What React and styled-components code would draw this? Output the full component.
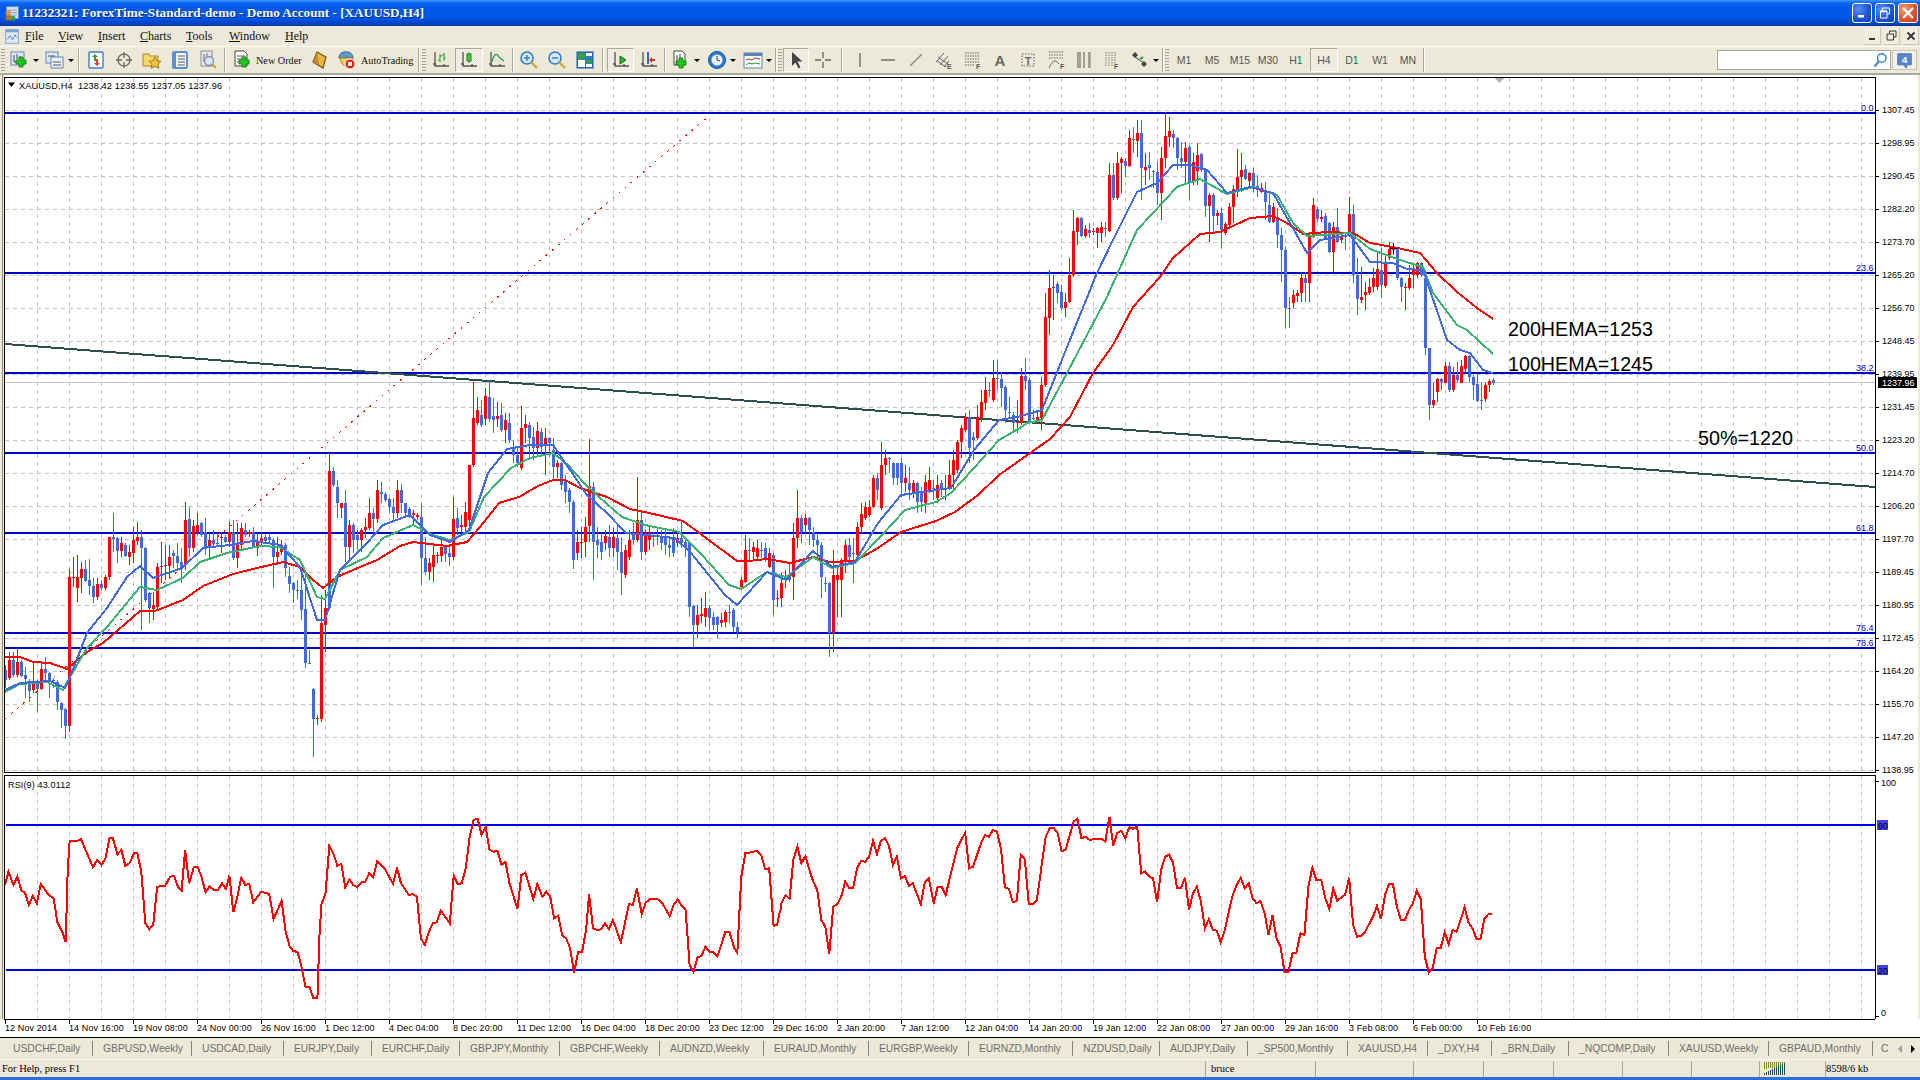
import React from 'react';
import styled, { createGlobalStyle } from 'styled-components';

const Global = createGlobalStyle`
  html, body { margin: 0; padding: 0; background: #ece9d8; overflow: hidden; }
  #root { width: 1920px; height: 1080px; }
`;

const SERIF = '"Liberation Serif", serif';
const SANS = '"Liberation Sans", Arial, sans-serif';

/* ---------- digitised chart data ---------- */
const segA = `15,570,600,b,555,625;27,540,595,r,515,600;40,540,585,b,515,590;52,545,585,r,505,590;64,545,587,b,540,590;76,585,597,b,560,655;88,603,632,b,597,665;100,603,630,r,545,640;112,610,628,b,600,695;124,568,628,r,545,630;136,568,580,b,530,610;148,580,600,b,575,655;160,600,603,b,595,625;172,605,665,b,600,690;184,670,690,b,665,745;196,687,738,b,685,778;208,290,738,r,268,755;220,290,293,r,230,320;232,290,323,r,225,365;244,268,295,r,245,340;256,268,302,b,240,305;268,300,318,b,238,345;280,318,350,b,295,370;292,312,350,r,295,360;304,312,325,b,300,330;316,290,325,r,285,330;328,170,290,r,170,300;340,172,178,b,100,215;352,175,212,b,170,250;364,190,212,r,170,230;376,195,228,b,190,232;388,215,230,r,195,255;400,180,218,r,140,250;412,170,182,r,125,195;424,170,205,b,150,450;436,205,360,b,200,365;448,340,385,b,335,430;460,375,388,r,335,420;472,262,380,r,250,390;484,258,262,r,185,310;496,255,258,r,195,300;508,232,258,r,195,290;520,220,228,b,210,265;532,228,250,b,190,265;544,245,260,b,205,310;556,120,255,r,65,270;568,118,205,b,80,230;580,138,205,r,120,215;592,135,155,r,100,165;604,130,165,b,125,170;616,155,205,b,115,225;628,180,205,r,160,240;640,180,192,b,150,200;652,190,193,b,160,200;664,172,175,r,155,220;676,170,185,b,165,190;688,155,185,r,125,200;700,155,235,b,120,240;712,195,235,r,130,265;724,145,195,r,130,210;736,150,165,b,130,170;748,155,162,r,150,170;760,155,205,b,140,205;772,183,205,r,160,228;784,175,190,r,155,195;796,172,182,b,165,190;808,172,180,b,160,190;820,180,230,b,175,325;832,215,230,r,170,255;844,195,215,r,180,225;856,195,265,b,190,290;868,288,312,b,260,340;880,310,330,b,305,370;892,330,333,b,300,358;904,330,390,b,280,420;916,388,550,b,280,565;928,548,551,b,510,552;940,628,718,b,625,830;952,714,718,r,705,735;964,430,718,r,345,725;976,385,435,r,330,515;988,310,385,b,300,390;988,-27,310,r,-80,330;1000,-27,15,b,-40,20;1012,20,68,b,0,115;1024,68,85,r,68,115;1036,68,200,b,30,245;1048,135,200,r,120,240;1060,135,180,b,130,220;1072,165,180,b,150,210;1084,150,180,r,145,215;1096,140,150,r,115,175;1108,100,145,r,55,150;1120,100,118,b,85,160;1132,30,118,r,0,130;1144,35,42,b,5,70;1156,42,60,b,35,65;1168,58,80,b,55,100;1180,80,100,b,55,120;1192,30,100,r,0,115;1204,30,70,b,12,100;1216,70,100,b,70,110;1228,88,110,b,80,115;1240,100,105,r,90,135;1252,105,112,r,100,120;1264,112,235,b,68,315;1276,235,275,b,170,285;1288,250,275,r,235,300;1300,225,260,r,190,305;1312,225,228,r,215,250;1324,200,228,r,180,245;1336,200,222,b,195,245;1348,220,232,b,195,258;1360,118,232,r,50,240;1372,115,145,b,85,165;1384,135,140,r,105,160;1396,95,140,r,65,160`;
const segB = `182,315,480,r,410,520;192,175,315,r,65,320;203,150,190,r,110,195;213,165,195,b,120,200;223,108,178,r,85,195;233,110,178,b,60,185;245,168,180,b,115,220;255,168,178,r,125,200;265,165,210,b,128,215;275,180,210,r,160,250;285,190,240,b,160,250;297,265,285,b,240,310;307,285,310,b,265,320;318,205,325,r,138,330;328,193,205,r,165,250;338,195,235,b,185,300;348,230,265,b,200,300;358,213,265,r,185,290;368,215,260,b,205,285;380,235,255,r,205,345;390,235,250,b,230,290;400,270,320,b,235,360;412,308,320,r,300,355;422,310,375,b,305,390;432,360,395,b,345,430;443,390,425,b,385,460;453,425,600,b,420,628;463,545,580,r,510,600;473,545,547,r,500,595;483,500,545,r,470,590;495,378,497,r,238,545;505,380,545,b,365,660;515,540,555,b,500,595;527,545,575,b,520,600;537,528,550,r,510,570;547,530,565,b,495,590;557,530,565,r,505,590;568,535,575,b,495,630;578,575,640,b,530,705;589,570,645,r,555,655;600,540,590,r,510,600;610,525,540,b,490,555;620,480,540,r,350,545;630,480,575,b,450,600;641,520,575,r,510,585;652,518,540,r,500,570;662,525,528,b,515,560;672,525,530,b,505,555;683,530,550,b,510,570;693,535,555,b,505,585;704,555,565,b,530,590;714,530,578,b,505,590;725,535,548,r,520,560;735,535,550,b,480,565;745,545,560,b,535,590;755,550,740,b,545,770;767,738,795,b,735,860;778,765,795,r,735,835;788,763,767,r,715,790;798,745,770,r,695,800;808,745,775,b,735,810;818,770,795,b,755,810;830,770,795,b,768,835;840,780,790,r,760,800;850,755,785,r,750,800;860,755,758,b,735,790;872,750,800,b,745,815;882,800,815,b,785,835;892,660,680,r,650,690;902,570,665,r,525,670;913,570,573,b,535,600;923,560,575,r,545,600;933,565,590,r,540,600;943,570,573,b,545,595;953,565,600,b,550,605;965,580,620,r,565,625;975,585,720,b,580,765;985,715,718,r,690,740;995,670,715,r,640,740;1006,650,653,r,630,685;1016,648,660,b,605,665;1027,535,650,r,490,720;1037,475,535,r,390,565;1048,475,515,b,465,550;1058,475,495,r,462,520;1068,475,510,b,470,555;1080,515,540,b,500,560;1090,540,555,b,520,590;1100,555,650,b,545,715;1112,668,672,b,650,695;1122,670,820,b,665,890;1132,645,820,r,570,875;1143,645,660,r,620,770;1153,600,660,r,595,770;1163,555,600,r,540,640;1174,555,590,b,535,600;1184,578,582,b,535,670;1195,500,585,r,485,600;1205,462,500,r,430,518;1215,440,475,r,425,480;1227,440,465,r,420,470;1237,355,440,r,345,445;1247,355,390,b,340,420;1258,315,445,r,245,450;1268,295,315,r,270,345;1278,295,298,b,290,340;1288,310,355,b,305,375;1298,310,355,b,310,375;1308,310,370,b,295,410;1318,355,370,r,315,395;1330,370,390,b,320,420;1340,370,400,r,360,415;1350,370,425,b,365,460;1360,395,425,b,380,455;1372,365,430,r,345,460;1382,360,395,r,320,400;1392,385,388,b,360,420;1405,375,415,r,345,430;1415,370,385,b,360,410;1425,385,388,r,345,420;1435,345,385,r,300,390;1445,300,345,r,270,390;1455,245,330,r,240,340;1465,205,245,r,195,295;1475,170,210,r,160,215;1486,170,265,b,150,310;1497,230,240,b,215,300;1508,170,235,r,135,240;1518,125,175,r,90,185;1530,90,130,r,50,150;1540,90,93,b,65,110;1550,55,120,r,0,125;1560,55,58,b,0,90`;
const segC = `4,868,895,b,845,950;16,890,960,b,885,1000;28,965,968,b,920,985;40,975,1000,b,965,1030;52,995,998,r,930,1030;64,858,1000,r,835,1005;76,858,872,b,805,900;88,870,995,b,865,1000;100,985,988,b,960,990;112,980,990,r,960,1000;124,885,985,r,860,1020;136,680,885,r,610,890;148,595,685,r,540,735;160,590,593,r,555,690;172,583,608,b,575,640;184,605,655,b,585,660;196,635,655,r,610,680;208,555,635,r,505,640;220,423,555,r,360,560;232,385,425,r,380,465;244,385,437,b,380,440;256,418,437,r,405,445;268,420,428,b,400,445;280,423,426,r,415,435;292,415,430,r,412,475;304,412,430,r,395,455;316,415,418,b,395,440;328,255,422,r,220,425;340,255,325,b,220,330;352,220,325,r,185,330;364,208,220,r,200,310;376,212,228,b,205,262;388,145,228,r,120,230;400,148,151,b,110,190;412,130,152,r,90,200;424,130,235,b,90,330;436,232,240,r,190,285;448,225,235,b,185,270;460,243,246,b,240,295;472,245,310,b,215,345;484,203,310,r,170,390;496,138,203,r,65,235;508,123,140,r,80,170;520,132,145,b,120,175;532,145,205,b,140,240;544,205,215,b,155,235;556,175,215,r,155,280;568,172,275,b,165,330;580,215,275,r,190,285;592,195,243,r,160,285;604,192,240,b,190,245;616,240,348,b,235,380;628,315,348,r,310,455;640,315,378,b,310,430;652,370,378,r,360,405;664,370,420,b,355,475;676,402,430,r,395,435;688,352,405,r,340,410;700,298,352,r,285,400;712,262,298,r,178,320;724,240,262,r,190,305;736,238,268,b,225,270;748,250,272,r,245,290;760,250,290,b,235,305;772,288,300,b,255,320;784,295,305,r,280,310;796,300,335,b,275,390;808,345,395,b,310,400;820,350,395,r,340,400;832,380,435,b,355,475;844,435,480,b,415,575;856,480,655,b,470,715;868,653,656,b,620,715;880,615,638,r,600,655;892,610,618,r,600,635;904,565,610,r,545,635;916,565,580,b,545,635;928,440,580,r,430,635;940,345,440,r,325,445;952,358,388,b,350,395;964,380,388,r,360,395;976,378,445,b,370,450;988,400,485,b,395,490;1000,412,485,r,395,545;1012,412,455,b,355,460;1024,440,450,r,430,460;1036,438,441,b,430,480;1048,372,435,r,322,440;1060,372,555,b,345,580;1072,555,628,b,505,675;1084,620,630,r,530,640;1096,605,615,r,575,660;1108,590,610,r,565,615;1120,565,590,r,535,605;1132,538,590,r,490,600;1144,540,585,b,475,625;1156,515,588,r,495,595;1168,478,505,r,455,510;1180,476,480,r,460,495;1192,478,565,b,470,570;1204,565,592,b,560,635;1216,590,593,r,580,660;1228,565,595,r,525,600;1240,538,555,r,525,595;1252,520,555,r,515,565;1264,518,555,b,515,560;1276,565,775,b,540,795;1288,775,945,b,775,990;1300,930,945,r,880,955;1312,868,905,r,865,935;1324,868,875,b,865,900;1336,828,878,r,815,880;1348,828,900,b,815,905;1360,855,900,r,830,905;1372,855,870,b,815,875;1384,828,878,r,810,880;1396,798,838,r,795,850;1408,798,860,b,795,875;1420,860,885,b,855,930;1432,882,932,b,850,935;1444,930,933,b,880,960;1456,885,928,r,880,935;1468,872,885,r,868,905;1480,870,878,b,865,885`;

const parseSeg = (s, sx, ox, oy) =>
  s.split(';').map((row) => {
    const [zx, t, b, c, wt, wb] = row.split(',');
    const x = ox + Number(zx) / sx;
    const bx = 5 + 4 * Math.round((x - 5) / 4);
    const Y = (v) => oy + Number(v) / 3;
    return { x: bx, top: Y(t), bot: Y(b), c, hi: Y(wt), lo: Y(wb) };
  });

const CANDLES = [
  ...parseSeg(segA, 3, 0, 480),
  ...parseSeg(segB, 2.613, 400, 360),
  ...parseSeg(segC, 3, 1000, 90),
];

const MA_RED = '5,657 20,657 33,662 50,663 67,669 87,652 103,643 140,611 155,611 183,600 203,586 233,574 257,568 283,562 300,567 313,580 323,588 337,577 360,567 377,560 400,546 413,542 447,546 467,542 480,527 499,503 519,497 538,486 553,480 565,480 580,488 607,497 630,509 649,513 683,521 702,535 737,561 748,561 767,559 790,563 813,557 830,562 855,561 878,548 901,532 936,521 955,512 978,495 999,475 1050,439 1070,417 1093,373 1113,345 1133,307 1160,277 1173,258 1200,234 1220,232 1250,218 1273,216 1287,223 1303,234 1327,232 1353,233 1370,243 1393,247 1420,253 1437,273 1457,292 1477,308 1493,319';
const MA_GREEN = '5,692 20,684 47,682 63,690 70,677 87,648 107,627 140,587 157,590 183,578 200,562 227,553 260,546 280,547 300,560 317,597 325,599 340,570 367,557 383,538 413,525 433,535 450,540 469,532 484,497 511,468 530,458 553,453 568,465 584,483 599,497 622,517 645,525 679,532 702,555 729,585 741,589 767,572 786,577 813,557 832,568 855,563 882,535 905,510 936,502 951,493 974,468 999,440 1020,428 1027,423 1042,420 1067,373 1107,297 1137,230 1153,213 1177,187 1200,179 1227,194 1253,187 1277,195 1293,223 1307,236 1350,233 1370,249 1400,260 1423,267 1433,293 1457,325 1467,330 1493,354';
const MA_BLUE = '5,690 20,683 50,681 65,688 70,677 87,633 107,608 127,577 140,566 153,578 182,568 203,548 230,545 253,541 280,545 300,567 317,620 325,620 340,570 367,543 383,525 410,515 430,535 450,542 469,530 488,473 507,449 530,445 553,445 568,467 587,495 607,513 626,533 675,538 691,553 725,595 737,605 767,572 786,580 813,551 832,567 855,562 878,523 901,495 951,488 974,450 999,420 1017,417 1042,410 1067,347 1097,273 1113,240 1137,192 1157,183 1173,165 1190,165 1207,170 1227,193 1250,187 1273,193 1307,253 1320,240 1350,235 1370,262 1393,263 1407,269 1423,270 1447,340 1460,350 1470,353 1483,370 1493,373';

const rsiLeft = '10,345;17,305;27,345;35,320;43,362;50,368;58,405;66,378;74,400;82,342;98,375;108,385;115,455;125,485;132,516;136,300;140,212;155,213;163,208;172,240;187,292;195,270;204,285;212,265;220,203;227,205;236,253;244,240;252,288;260,280;270,248;276,250;284,305;292,460;300,478;308,465;316,350;332,347;342,320;350,318;358,352;365,363;372,240;380,340;390,290;397,290;405,320;413,367;421,350;430,360;438,360;446,340;454,356;461,317;469,427;477,380;485,323;493,345;501,342;509,397;525,365;541,372;550,447;566,392;574,485;582,528;590,544;598,545;606,590;614,650;622,650;630,685;638,685;642,500;646,403;654,372;662,227;670,250;678,287;686,282;694,352;702,328;710,345;718,352;726,337;734,335;742,310;750,322;758,274;774,298;790,342;798,293;806,340;822,375;830,372;838,380;846,505;854,525;862,485;870,460;878,457;886,422;904,460;912,317;920,342;928,340;936,295;944,200;952,150;960,146;968,195;976,170;984,240;992,245;1000,243;1008,285;1016,276;1024,340;1040,417;1048,315;1056,308;1072,387;1080,342;1090,380;1098,365;1106,380;1114,445;1122,437;1130,497;1138,505;1146,535;1154,608;1162,547;1170,545;1178,480;1184,373;1192,475;1200,480;1208,478;1216,460;1224,478;1232,450;1248,517;1264,402;1272,405;1280,356;1290,432;1298,397;1306,388;1322,388;1330,397;1346,438;1354,405;1362,388;1370,407;1378,420;1386,585;1394,605;1402,562;1410,558;1418,530;1426,545;1434,546;1442,560;1458,485;1466,485;1476,535;1482,548;1490,320;1498,250;1506,248;1514,245;1522,242;1530,255;1538,298;1546,295;1555,467;1562,465;1568,420';
const rsiRight = '0,430;3,400;11,375;19,387;27,268;35,230;43,280;51,258;59,300;67,335;75,360;83,450;91,470;99,552;107,410;115,403;123,380;131,335;139,354;147,354;155,295;163,272;171,275;179,260;187,212;195,252;203,212;211,205;219,228;227,285;235,260;243,325;251,318;259,348;267,340;283,403;291,337;299,325;309,400;317,350;325,350;333,375;356,235;372,188;380,295;388,290;404,220;412,195;420,200;428,180;436,185;444,235;452,352;460,356;468,397;476,392;484,254;492,268;500,403;508,403;516,392;534,200;542,175;550,173;558,190;566,243;574,240;590,155;598,146;606,205;614,200;622,210;630,208;646,207;654,214;662,140;670,228;678,188;686,183;694,205;702,172;710,176;718,170;726,310;734,305;742,320;750,325;758,397;766,300;774,260;782,254;790,278;798,354;806,354;814,323;822,420;830,370;838,350;846,395;854,475;862,447;870,480;878,482;886,517;894,480;902,425;910,375;918,345;926,323;934,355;942,340;950,385;958,400;966,393;974,430;982,495;990,435;998,505;1006,530;1014,605;1022,605;1030,550;1038,548;1046,490;1054,495;1062,350;1070,293;1078,330;1088,330;1096,385;1104,417;1112,356;1120,392;1136,374;1144,323;1152,465;1160,500;1168,497;1176,485;1192,440;1200,408;1208,447;1216,375;1224,342;1232,342;1240,410;1248,450;1256,450;1264,420;1272,400;1280,362;1288,388;1296,560;1304,608;1312,595;1320,533;1328,533;1336,487;1344,522;1352,480;1360,485;1368,450;1376,412;1384,458;1392,475;1400,507;1408,507;1416,445;1424,432;1432,432';
const rsiPts = (s, ox) =>
  s.split(';').map((p) => {
    const [x, y] = p.split(',').map(Number);
    return `${(ox + x / 2.01).toFixed(1)},${(770 + y / 3).toFixed(1)}`;
  }).join(' ');
const RSI_LINE = `${rsiPts(rsiLeft, 0)} ${rsiPts(rsiRight, 780)}`;

const PRICES = ['1307.45','1298.95','1290.45','1282.20','1273.70','1265.20','1256.70','1248.45','1239.95','1231.45','1223.20','1214.70','1206.20','1197.70','1189.45','1180.95','1172.45','1164.20','1155.70','1147.20','1138.95'];
const LEVELS = [[113,'0.0'],[273,'23.6'],[373,'38.2'],[453,'50.0'],[533,'61.8'],[633,'76.4'],[648,'78.6']];
const TIMES = ['12 Nov 2014','14 Nov 16:00','19 Nov 08:00','24 Nov 00:00','26 Nov 16:00','1 Dec 12:00','4 Dec 04:00','8 Dec 20:00','11 Dec 12:00','16 Dec 04:00','18 Dec 20:00','23 Dec 12:00','29 Dec 16:00','2 Jan 20:00','7 Jan 12:00','12 Jan 04:00','14 Jan 20:00','19 Jan 12:00','22 Jan 08:00','27 Jan 00:00','29 Jan 16:00','3 Feb 08:00','6 Feb 00:00','10 Feb 16:00'];
const TABS = [['USDCHF,Daily',93,13],['GBPUSD,Weekly',99],['USDCAD,Daily',92],['EURJPY,Daily',88],['EURCHF,Daily',88],['GBPJPY,Monthly',100],['GBPCHF,Weekly',100],['AUDNZD,Weekly',104],['EURAUD,Monthly',105],['EURGBP,Weekly',100],['EURNZD,Monthly',104],['NZDUSD,Daily',87],['AUDJPY,Daily',88],['_SP500,Monthly',100],['XAUUSD,H4',80],['_DXY,H4',64],['_BRN,Daily',77],['_NQCOMP,Daily',100],['XAUUSD,Weekly',100],['GBPAUD,Monthly',104]];
const MENUS = [['F','ile',33],['V','iew',40],['I','nsert',42],['C','harts',46],['T','ools',43],['W','indow',56],['H','elp',40]];
const FRAMES = ['M1','M5','M15','M30','H1','H4','D1','W1','MN'];
const STATUS_CELLS = [110, 98, 70, 70, 69, 69, 68];

const gridV = Array.from({ length: 58 }, (_, i) => 37.5 + 32 * i);
const gridH = Array.from({ length: 21 }, (_, i) => 110.5 + 33 * i);
const COLOR = { r: '#ff0000', b: '#4169e1' };

/* ---------- page frame ---------- */
const Window = styled.div`
  width: 1920px; height: 1080px; display: flex; flex-direction: column;
  background: #ece9d8; overflow: hidden;
`;
const TitleBar = styled.div`
  height: 26px; flex: none; display: flex; align-items: center; padding: 0 2px 0 4px;
  background: linear-gradient(#3f94fb 0, #0a66ee 3px, #0058e6 8px, #0058e6 17px, #0049d4 22px, #003cae 25px, #002f98 26px);
`;
const TitleText = styled.div`
  margin-left: 1px; flex: 1; font: bold 13.2px ${SERIF}; color: #fff; white-space: nowrap;
  text-shadow: 1px 1px 0 #0a2a80;
`;
const WinButton = styled.div`
  width: 20px; height: 20px; margin-left: 3px; box-sizing: border-box; display: flex;
  align-items: center; justify-content: center; border: 1px solid #fff; border-radius: 3px;
  background: ${(p) => (p.$close
    ? 'radial-gradient(circle at 30% 30%, #f0a080, #e0562c 55%, #c23a10)'
    : 'radial-gradient(circle at 30% 30%, #5a8ff0, #1f55d8 55%, #0f3fb8)')};
`;
const MenuBar = styled.div`
  height: 20px; flex: none; display: flex; align-items: center; padding-left: 4px;
  background: #ece9d8;
`;
const MenuIconSlot = styled.div` width: 18px; margin-right: 3px; `;
const MenuItem = styled.div`
  width: ${(p) => p.$w}px; font: 12px ${SERIF}; color: #111; white-space: nowrap;
  u { text-decoration: underline; }
`;
const MdiGroup = styled.div` margin-left: auto; display: flex; gap: 3px; padding-right: 1px; `;
const MdiButton = styled.div`
  width: 15px; height: 16px; display: flex; align-items: center; justify-content: center;
  background: #f1eee0; border-bottom: 1px solid #cbc7b8; border-right: 1px solid #cbc7b8;
`;
const Toolbar = styled.div`
  height: 29px; box-sizing: border-box; flex: none; display: flex; align-items: center;
  border-top: 1px solid #fff; border-bottom: 2px solid #aca899; background: #ece9d8;
`;
const Grip = styled.div`
  width: 4px; height: 22px; margin: 0 1px; flex: none;
  background: repeating-linear-gradient(#a8a494 0 1px, transparent 1px 3px);
`;
const Sep = styled.div`
  width: 1px; height: 24px; flex: none; background: #aca899; margin: 0 ${(p) => p.$m ?? 1}px;
  border-right: 1px solid #fff;
`;
const Tool = styled.div`
  width: ${(p) => p.$w || 28}px; height: 24px; flex: none; display: flex; align-items: center;
  justify-content: ${(p) => (p.$left !== undefined ? 'flex-start' : 'center')}; box-sizing: border-box;
  padding-left: ${(p) => p.$left || 0}px;
  gap: ${(p) => p.$gap ?? 2}px;
  ${(p) => p.$on && `
    border: 1px solid #aca899; border-right-color: #fff; border-bottom-color: #fff;
    background: repeating-conic-gradient(#f7f5ec 0 25%, #e6e3d4 0 50%) 0 0/2px 2px;
  `}
`;
const ToolLabel = styled.span` font: 10.2px ${SERIF}; color: #111; white-space: nowrap; `;
const FrameLabel = styled.span` font: 10.5px ${SANS}; color: #555; `;
const SearchBox = styled.div`
  margin-left: auto; margin-right: 1px; width: 174px; height: 20px; box-sizing: border-box;
  background: #fff; border: 1px solid #aca899; display: flex; align-items: center;
  justify-content: flex-end; padding-right: 1px;
`;
const ChatButton = styled.div`
  width: 25px; height: 20px; margin-right: 3px; box-sizing: border-box; border: 1px solid #c9c5b6;
  background: #f3f1e7; display: flex; align-items: center; justify-content: center;
`;

/* ---------- chart ---------- */
const Pane = styled.svg`
  display: block; flex: none; width: 1920px; background: #fff;
  shape-rendering: crispEdges;
`;
const TimeAxis = styled.div`
  height: 18px; flex: none; box-sizing: border-box; display: flex; background: #fff;
  border-top: 1px solid #000; margin-left: 4px; padding-left: 1px; width: 1871px;
`;
const TimeAxisWrap = styled.div` display: flex; flex: none; background: #fff; `;
const TimeLabel = styled.div`
  width: 64px; flex: none; padding-top: 3px; box-sizing: border-box;
  font: 9px ${SANS}; letter-spacing: 0.1px; color: #000; white-space: nowrap;
  background: linear-gradient(#000, #000) left top / 1px 4px no-repeat;
`;
const TabBar = styled.div`
  height: 22px; flex: none; box-sizing: border-box; display: flex; align-items: center;
  border-top: 1px solid #000; background: #ece9d8;
`;
const Tab = styled.div`
  width: ${(p) => p.$w}px; height: 15px; flex: none; box-sizing: border-box;
  padding-left: ${(p) => p.$pad || 10}px; border-right: 1px solid #8a877a;
  font: 10.3px/15px ${SANS}; color: #6d6d6d; white-space: nowrap; overflow: hidden;
`;
const TabArrows = styled.div`
  flex: 1; display: flex; align-items: center; justify-content: space-between;
  padding: 0 5px 0 8px; font: 10.3px ${SANS}; color: #6d6d6d;
`;
const Arrow = styled.span`
  width: 0; height: 0; border-top: 4px solid transparent; border-bottom: 4px solid transparent;
  ${(p) => (p.$dir === 'l' ? `border-right: 4px solid ${p.$c};` : `border-left: 4px solid ${p.$c};`)}
`;
const StatusBar = styled.div`
  height: 18px; flex: none; display: flex; align-items: center; background: #ece9d8;
  border-top: 1px solid #f7f5ec; box-sizing: border-box;
`;
const StatusCell = styled.div`
  width: ${(p) => p.$w}px; height: 16px; flex: none; box-sizing: border-box;
  ${(p) => !p.$first && 'border-left: 1px solid #aca899;'}
  padding-left: ${(p) => p.$pad || 0}px; font: 10.5px/16px ${SERIF}; color: #000; white-space: nowrap;
  display: flex; align-items: center;
`;
const BottomEdge = styled.div` height: 3px; flex: none; background: #2f6fd6; `;

/* ---------- icons ---------- */
const Ic = styled.svg` display: block; width: ${(p) => p.$s || 20}px; height: ${(p) => p.$s || 20}px; flex: none; `;
const I = ({ children, s }) => <Ic $s={s} viewBox="0 0 20 20">{children}</Ic>;
const DropDown = styled.span`
  width: 0; height: 0; margin-left: 1px; border-left: 3px solid transparent; border-right: 3px solid transparent;
  border-top: 3px solid #000;
`;
const Plus = ({ x = 10, y = 10 }) => (
  <path d={`M${x + 3} ${y}h4v3h3v4h-3v3h-4v-3h-3v-4h3z`} fill="#22c41e" stroke="#0a7a10" strokeWidth=".8" />
);
const Axes = ({ c = '#555' }) => <path d="M4 2v14h14M2 14h3M13 14v3" fill="none" stroke={c} strokeWidth="1.3" />;

const Ico = {
  App: () => <I s={17}><rect x="3" y="2" width="14" height="14" fill="#cfe0f4" stroke="#6f8fb8" /><path d="M5 6h10M5 9h10M5 12h10" stroke="#7fa2cf" /><circle cx="5" cy="9" r="3" fill="#e89030" /><rect x="2" y="12" width="6" height="6" fill="#b87018" /><rect x="8" y="13" width="5" height="5" fill="#3aa040" /></I>,
  Menu: () => <I s={17}><rect x="2" y="2" width="15" height="16" fill="#dfe9f7" stroke="#7aa0d0" /><rect x="2" y="2" width="15" height="3" fill="#7aa0d0" /><path d="M4 13l3-4 3 5 3-6 2 3" fill="none" stroke="#4a74b0" /></I>,
  NewChart: () => <I><rect x="1" y="2" width="13" height="13" fill="#dfeaf8" stroke="#5f84b4" /><path d="M4 5v7h7M7 4v5M10 6v4" stroke="#445" fill="none" /><Plus x={6} y={7} /></I>,
  Profiles: () => <I><rect x="1" y="2" width="12" height="11" fill="#dfeaf8" stroke="#5f84b4" /><rect x="6" y="7" width="12" height="11" fill="#eef3fb" stroke="#5f84b4" /><path d="M3 6h7M8 12h8M8 15h8" stroke="#555" /></I>,
  Market: () => <I><rect x="3" y="2" width="14" height="16" rx="1" fill="#fff" stroke="#3f7fc8" strokeWidth="1.4" /><path d="M9 4l3 3h-2v4h-2v-4h-2z" fill="#2aa52a" /><path d="M11 16l-3-3h2v-4h2v4h2z" fill="#d84030" /></I>,
  Nav: () => <I><circle cx="10" cy="10" r="6" fill="none" stroke="#777" strokeWidth="1.5" /><path d="M10 2v6M10 12v6M2 10h6M12 10h6" stroke="#666" strokeWidth="1.3" /></I>,
  Star: () => <I><path d="M1 4h6l1 2h8v10H1z" fill="#f4d66a" stroke="#a88a28" /><path d="M13 7l1.8 3.8 4.2.5-3 2.9.8 4.1-3.8-2-3.8 2 .8-4.1-3-2.9 4.2-.5z" fill="#f2c440" stroke="#9a7a18" /></I>,
  Term: () => <I><rect x="3" y="2" width="14" height="16" rx="1" fill="#f3f7fd" stroke="#2f6fb8" strokeWidth="1.4" /><rect x="3" y="2" width="3" height="16" fill="#5b93d2" /><path d="M8 6h7M8 9h7M8 12h7M8 15h7" stroke="#556" /></I>,
  Tester: () => <I><rect x="3" y="1" width="11" height="15" fill="#e8e8e8" stroke="#8a8a8a" /><path d="M6 4v8M9 3v7" stroke="#666" /><circle cx="11" cy="11" r="4.5" fill="#d6e4f4" stroke="#7a8ea6" strokeWidth="1.3" /><path d="M14 14l4 4" stroke="#c8a030" strokeWidth="2" /></I>,
  Order: () => <I><path d="M2 1h9l3 3v12H2z" fill="#fff" stroke="#444" /><path d="M4 6h8M4 9h8M4 12h5" stroke="#555" /><Plus x={6} y={7} /></I>,
  Gold: () => <I><path d="M8 2l9 5-3 11-10-6z" fill="#e8b840" stroke="#7a4e10" strokeWidth="1.2" /><path d="M8 2l-4 10 6 3" fill="#c48a28" /></I>,
  Auto: () => <I><path d="M3 8c0-5 5-7 8-6 3 0 6 2 6 6z" fill="#5a9ad0" stroke="#2f6a9a" /><path d="M4 8h13c0 3-1 8-6 8S4 11 4 8z" fill="#f2cd55" stroke="#a88420" /><circle cx="14" cy="14" r="5" fill="#e02018" stroke="#fff" /><rect x="12" y="12" width="4" height="4" fill="#fff" /></I>,
  Bars: () => <I><Axes /><path d="M9 4v8M7 10h2M9 6h2M13 3v8M11 5h2M13 8h2" stroke="#2a9a2a" fill="none" /></I>,
  Candles: () => <I><Axes /><path d="M10 2v11" stroke="#1c7a1c" /><rect x="8" y="4" width="4" height="7" fill="#3ed13e" stroke="#1c7a1c" /></I>,
  LineC: () => <I><Axes /><path d="M5 12c2-9 5-9 7-5l5 4" fill="none" stroke="#2a9a5a" strokeWidth="1.3" /></I>,
  ZoomIn: () => <I><circle cx="8" cy="8" r="6" fill="#d6e9fa" stroke="#2f7cc8" strokeWidth="1.6" /><path d="M5 8h6M8 5v6" stroke="#2f7cc8" strokeWidth="1.4" /><path d="M12 12l6 6" stroke="#d0a838" strokeWidth="2.4" /></I>,
  ZoomOut: () => <I><circle cx="8" cy="8" r="6" fill="#d6e9fa" stroke="#2f7cc8" strokeWidth="1.6" /><path d="M5 8h6" stroke="#2f7cc8" strokeWidth="1.4" /><path d="M12 12l6 6" stroke="#d0a838" strokeWidth="2.4" /></I>,
  Tile: () => <I><rect x="2" y="2" width="16" height="16" fill="#2f7cc8" stroke="#1f5a96" /><rect x="3" y="3" width="7" height="6" fill="#3aa03a" /><rect x="11" y="3" width="6" height="3" fill="#fff" /><rect x="3" y="10" width="7" height="7" fill="#fff" /><rect x="11" y="10" width="6" height="3" fill="#3aa03a" /><rect x="11" y="14" width="6" height="3" fill="#fff" /></I>,
  Scroll: () => <I><Axes /><path d="M9 6l6 4-6 4z" fill="#28b428" stroke="#157515" /></I>,
  Shift: () => <I><Axes /><path d="M9 2v12" stroke="#2f6fb8" strokeWidth="2" /><path d="M16 9h-3v-2l-3 3 3 3v-2h3z" fill="#d03020" /></I>,
  Indic: () => <I><path d="M3 1h8l3 3v11H3z" fill="#fff" stroke="#444" /><path d="M6 5v7h5M9 4v5" stroke="#333" fill="none" /><Plus x={5} y={8} /></I>,
  Clock: () => <I><circle cx="10" cy="10" r="8.5" fill="#2a7cd0" stroke="#154f90" /><circle cx="10" cy="10" r="5.5" fill="#eaf3fb" /><path d="M10 6v4l3 1" stroke="#333" fill="none" /></I>,
  Template: () => <I><rect x="1" y="3" width="18" height="15" fill="#f8fbff" stroke="#5f84b4" /><rect x="1" y="3" width="18" height="3" fill="#5f84b4" /><path d="M3 10l3-1 3 1 3-2 5 1" stroke="#c03020" fill="none" /><path d="M3 15l3-2 3 1 3-1 5 1" stroke="#2a9a2a" fill="none" /></I>,
  Cursor: () => <I><path d="M6 2v14l3.5-3.5 3 6 2-1-3-6h5z" fill="#444" /></I>,
  Cross: () => <I><path d="M10 2v6M10 12v6M2 10h6M12 10h6" stroke="#666" strokeWidth="1.3" /></I>,
  VLine: () => <I><path d="M10 3v14" stroke="#666" strokeWidth="1.3" /></I>,
  HLine: () => <I><path d="M3 10h14" stroke="#666" strokeWidth="1.4" /></I>,
  Trend: () => <I><path d="M4 16L16 4" stroke="#888" strokeWidth="1.5" /></I>,
  Channel: () => <I><path d="M2 12l8-9M6 15l8-9M10 17l5-6M4 7l10 7M3 11l9 6" stroke="#666" fill="none" /><text x="13" y="19" fontFamily={SANS} fontSize="7" fontWeight="700" fill="#555">E</text></I>,
  FibF: () => <I><path d="M3 3h14M3 6h14M3 9h14M3 12h14M3 15h10" stroke="#666" strokeDasharray="1.5 1" /><text x="14" y="19" fontFamily={SANS} fontSize="7" fontWeight="700" fill="#555">F</text></I>,
  LetterA: () => <I><text x="10" y="16" textAnchor="middle" fontFamily={SANS} fontSize="15" fontWeight="700" fill="#666">A</text></I>,
  LetterT: () => <I><rect x="4" y="4" width="12" height="12" fill="none" stroke="#666" strokeDasharray="1.5 1.5" /><text x="10" y="14.5" textAnchor="middle" fontFamily={SANS} fontSize="11" fontWeight="700" fill="#666">T</text></I>,
  FanF: () => <I><path d="M3 2h14M3 5h14M3 8h14" stroke="#666" strokeDasharray="1.5 1" /><path d="M3 18c2-5 4-7 7-7l3 3" stroke="#666" fill="none" /><text x="14" y="19" fontFamily={SANS} fontSize="7" fontWeight="700" fill="#555">F</text></I>,
  Cycle: () => <I><path d="M4 2v16M6 2v16M10 2v16M15 2v16" stroke="#666" strokeWidth="1.1" /><path d="M16.5 2v16" stroke="#aaa" /></I>,
  CycleF: () => <I><path d="M4 2v15M7 2v15M10 2v15M13 2v12" stroke="#777" strokeDasharray="1.5 1" /><text x="12" y="19" fontFamily={SANS} fontSize="7" fontWeight="700" fill="#555">F</text></I>,
  Signs: () => <I><path d="M5 2l3 3-3 3-3-3zM14 11l3 3-3 3-3-3z" fill="#444" /><path d="M5 7l9 6" stroke="#444" /><path d="M10 9l3-2" stroke="#2a9a2a" strokeWidth="2" /></I>,
  Search: () => <I s={17}><circle cx="11.5" cy="7" r="5" fill="#fff" stroke="#3a85d0" strokeWidth="1.7" /><path d="M8 11l-5 6" stroke="#3a85d0" strokeWidth="2.6" /></I>,
  Chat: () => <I s={17}><path d="M2 2h16v13H13l-1 4-3-4H2z" fill="#5a86c8" stroke="#3f6cb0" /><text x="10" y="12.5" textAnchor="middle" fontFamily={SANS} fontSize="11" fontWeight="700" fill="#fff">4</text></I>,
};

const Win = {
  Min: () => <svg width="10" height="10" viewBox="0 0 10 10"><rect x="1" y="7" width="6" height="2.5" fill="#fff" /></svg>,
  Max: () => <svg width="12" height="12" viewBox="0 0 12 12"><path d="M3.5 3V1h7v6H8.500M1.500 4h6.500v7H1.500z" fill="none" stroke="#fff" /><path d="M1.500 4.500h6.500" stroke="#fff" strokeWidth="1.5" /></svg>,
  Close: () => <svg width="14" height="14" viewBox="0 0 14 14"><path d="M2 2l10 10M12 2L2 12" stroke="#fff" strokeWidth="2.2" /></svg>,
  MMin: () => <svg width="10" height="10" viewBox="0 0 10 10"><rect x="1" y="7" width="6" height="2" fill="#333" /></svg>,
  MMax: () => <svg width="11" height="11" viewBox="0 0 11 11"><path d="M3.5 3V1h6.500v6H8M1 4h6.500v6H1z" fill="none" stroke="#333" /></svg>,
  MClose: () => <svg width="10" height="10" viewBox="0 0 10 10"><path d="M1.500 1.500l7 7M8.500 1.500l-7 7" stroke="#333" strokeWidth="1.8" /></svg>,
};

/* ---------- chart panes ---------- */
const PricePane = () => (
  <Pane height="698" viewBox="0 75 1920 698">
    <rect x="0" y="75" width="4" height="698" fill="#ece9d8" />
    <path d="M2.5 75v698" stroke="#8f8c7e" />
    <rect x="1918" y="75" width="2" height="698" fill="#ece9d8" />
    <g stroke="#c0c0c0" strokeDasharray="4 4">
      {gridV.map((x) => <line key={x} x1={x} x2={x} y1="78" y2="773" />)}
      {gridH.map((y) => <line key={y} x1="5" x2="1875" y1={y} y2={y} />)}
    </g>
    <line x1="5" y1="719" x2="710" y2="115" stroke="#ff0000" strokeDasharray="2 6" />
    <line x1="5" x2="1875" y1="382.5" y2="382.5" stroke="#c0c0c0" />
    {LEVELS.map(([y]) => <rect key={y} x="5" y={y - 1} width="1870" height="2" fill="#0000c8" />)}
    <line x1="5" y1="344" x2="1875" y2="487" stroke="#2f4f4f" strokeWidth="2" />
    {CANDLES.map((k, i) => (
      <g key={i} fill={COLOR[k.c]}>
        <rect x={k.x} y={k.hi} width="1" height={Math.max(k.lo - k.hi, 1)} />
        <rect x={k.x - 1} y={k.top} width="3" height={Math.max(k.bot - k.top, 1)} />
      </g>
    ))}
    <polyline points={MA_RED} fill="none" stroke="#ff0000" strokeWidth="2" />
    <polyline points={MA_GREEN} fill="none" stroke="#3cb371" strokeWidth="2" />
    <polyline points={MA_BLUE} fill="none" stroke="#4169e1" strokeWidth="2" />
    <path d="M1393.5 243v10M1390 248.5h7" stroke="#000" />
    <polygon points="1495,78 1504,78 1499.5,83" fill="#b4b4b4" />
    <g shapeRendering="geometricPrecision">
      <polygon points="8,82.5 15,82.5 11.5,87" fill="#000" />
      <text x="19" y="89" fontFamily={SANS} fontSize="9.2" letterSpacing="0.12" xmlSpace="preserve" fill="#000">XAUUSD,H4  1238.42 1238.55 1237.05 1237.96</text>
      {LEVELS.map(([y, t]) => (
        <text key={t} x="1873.5" y={y - 2.5} textAnchor="end" fontFamily={SANS} fontSize="9" fill="#0000c8">{t}</text>
      ))}
      <text x="1508" y="336" fontFamily={SANS} fontSize="20" fill="#000" textLength="145" lengthAdjust="spacingAndGlyphs">200HEMA=1253</text>
      <text x="1508" y="371" fontFamily={SANS} fontSize="20" fill="#000" textLength="145" lengthAdjust="spacingAndGlyphs">100HEMA=1245</text>
      <text x="1698" y="445" fontFamily={SANS} fontSize="20" fill="#000" textLength="95" lengthAdjust="spacingAndGlyphs">50%=1220</text>
      {PRICES.map((p, i) => (
        <text key={p} x="1882" y={112.5 + 33 * i} fontFamily={SANS} fontSize="9" fill="#000">{p}</text>
      ))}
    </g>
    {PRICES.map((p, i) => <line key={p} x1="1875" x2="1879" y1={110.5 + 33 * i} y2={110.5 + 33 * i} stroke="#000" />)}
    <rect x="1878" y="377" width="39" height="11" fill="#000" />
    <text x="1882" y="386" fontFamily={SANS} fontSize="9" fill="#fff" shapeRendering="geometricPrecision">1237.96</text>
    <rect x="4.5" y="77.5" width="1871" height="695" fill="none" stroke="#000" />
  </Pane>
);

const RsiPane = () => (
  <Pane height="246" viewBox="0 773 1920 246">
    <rect x="0" y="773" width="4" height="246" fill="#ece9d8" />
    <path d="M2.5 773v246" stroke="#8f8c7e" />
    <rect x="1918" y="773" width="2" height="246" fill="#ece9d8" />
    <g stroke="#c8c8c8" strokeDasharray="4 4">
      {gridV.map((x) => <line key={x} x1={x} x2={x} y1="776" y2="1019" />)}
    </g>
    <rect x="6" y="824" width="1869" height="2" fill="#0000e6" />
    <rect x="6" y="969" width="1869" height="2" fill="#0000e6" />
    <polyline points={RSI_LINE} fill="none" stroke="#ff0000" strokeWidth="2" />
    <rect x="1877" y="820" width="11" height="10" fill="#4040f0" />
    <rect x="1877" y="965" width="11" height="10" fill="#4040f0" />
    <g shapeRendering="geometricPrecision" fontFamily={SANS} fontSize="9" fill="#000">
      <text x="8" y="788" letterSpacing="0.15">RSI(9) 43.0112</text>
      <text x="1881" y="786">100</text>
      <text x="1878" y="828.5">80</text>
      <text x="1878" y="973.5">20</text>
      <text x="1881" y="1016">0</text>
    </g>
    <path d="M1875 781h4M1875 1016h4" stroke="#000" />
    <rect x="4.5" y="775.5" width="1871" height="244" fill="none" stroke="#000" />
  </Pane>
);

const T = ({ w, on, children, left, gap }) => <Tool $w={w} $on={on} $left={left} $gap={gap}>{children}</Tool>;

export default function App() {
  return (
    <Window>
      <Global />
      <TitleBar>
        <Ico.App />
        <TitleText>11232321: ForexTime-Standard-demo - Demo Account - [XAUUSD,H4]</TitleText>
        <WinButton><Win.Min /></WinButton>
        <WinButton><Win.Max /></WinButton>
        <WinButton $close><Win.Close /></WinButton>
      </TitleBar>
      <MenuBar>
        <MenuIconSlot><Ico.Menu /></MenuIconSlot>
        {MENUS.map(([k, r, w]) => <MenuItem key={r} $w={w}><u>{k}</u>{r}</MenuItem>)}
        <MdiGroup>
          <MdiButton><Win.MMin /></MdiButton>
          <MdiButton><Win.MMax /></MdiButton>
          <MdiButton><Win.MClose /></MdiButton>
        </MdiGroup>
      </MenuBar>
      <Toolbar>
        <Grip />
        <T w={36}><Ico.NewChart /><DropDown /></T>
        <T w={34}><Ico.Profiles /><DropDown /></T>
        <Sep $m={2} />
        <T><Ico.Market /></T><T><Ico.Nav /></T><T><Ico.Star /></T><T><Ico.Term /></T><T><Ico.Tester /></T>
        <Sep $m={2} />
        <T w={77} left={5} gap={3}><Ico.Order /><ToolLabel>New Order</ToolLabel></T>
        <T w={28}><Ico.Gold /></T>
        <T w={84} left={3} gap={5}><Ico.Auto /><ToolLabel>AutoTrading</ToolLabel></T>
        <Sep $m={1} />
        <Grip />
        <T><Ico.Bars /></T><T on><Ico.Candles /></T><T><Ico.LineC /></T>
        <Sep $m={1} />
        <T><Ico.ZoomIn /></T><T><Ico.ZoomOut /></T><T><Ico.Tile /></T>
        <Sep $m={3} />
        <T on w={27}><Ico.Scroll /></T><T w={29}><Ico.Shift /></T>
        <Sep $m={1} />
        <T w={36}><Ico.Indic /><DropDown /></T><T w={36}><Ico.Clock /><DropDown /></T><T w={36}><Ico.Template /><DropDown /></T>
        <Sep $m={0} />
        <Grip />
        <T on w={26}><Ico.Cursor /></T><T><Ico.Cross /></T>
        <Sep $m={3.5} />
        <T><Ico.VLine /></T><T><Ico.HLine /></T><T><Ico.Trend /></T><T><Ico.Channel /></T><T><Ico.FibF /></T><T><Ico.LetterA /></T><T><Ico.LetterT /></T><T><Ico.FanF /></T><T><Ico.Cycle /></T><T><Ico.CycleF /></T>
        <T w={36}><Ico.Signs /><DropDown /></T>
        <Sep $m={0} />
        <Grip />
        {FRAMES.map((f) => <T key={f} on={f === 'H4'}><FrameLabel>{f}</FrameLabel></T>)}
        <Sep $m={1} />
        <SearchBox><Ico.Search /></SearchBox>
        <ChatButton><Ico.Chat /></ChatButton>
      </Toolbar>
      <PricePane />
      <RsiPane />
      <TimeAxisWrap>
        <TimeAxis>{TIMES.map((t) => <TimeLabel key={t}>{t}</TimeLabel>)}</TimeAxis>
      </TimeAxisWrap>
      <TabBar>
        {TABS.map(([t, w, p]) => <Tab key={t} $w={w} $pad={p}>{t}</Tab>)}
        <TabArrows>C<Arrow $dir="l" $c="#a0a0a0" /><Arrow $dir="r" $c="#000" /></TabArrows>
      </TabBar>
      <StatusBar>
        <StatusCell $first $w={1205} $pad={2}>For Help, press F1</StatusCell>
        <StatusCell $w={STATUS_CELLS[0]} $pad={5}>bruce</StatusCell>
        {STATUS_CELLS.slice(1).map((w, i) => <StatusCell key={i} $w={w} />)}
        <StatusCell $w={66} $pad={4}>
          <svg width="24" height="13" viewBox="0 0 24 13" shapeRendering="crispEdges">
            {Array.from({ length: 11 }, (_, i) => (
              <g key={i}>
                <rect x={i * 2} y="0" width="1" height={7 - i * 0.3} fill="#7b8f10" />
                <rect x={i * 2} y={11 - i} width="1" height={i + 2} fill="#0f4f60" />
              </g>
            ))}
          </svg>
        </StatusCell>
        <StatusCell $w={95}>8598/6 kb</StatusCell>
      </StatusBar>
      <BottomEdge />
    </Window>
  );
}
